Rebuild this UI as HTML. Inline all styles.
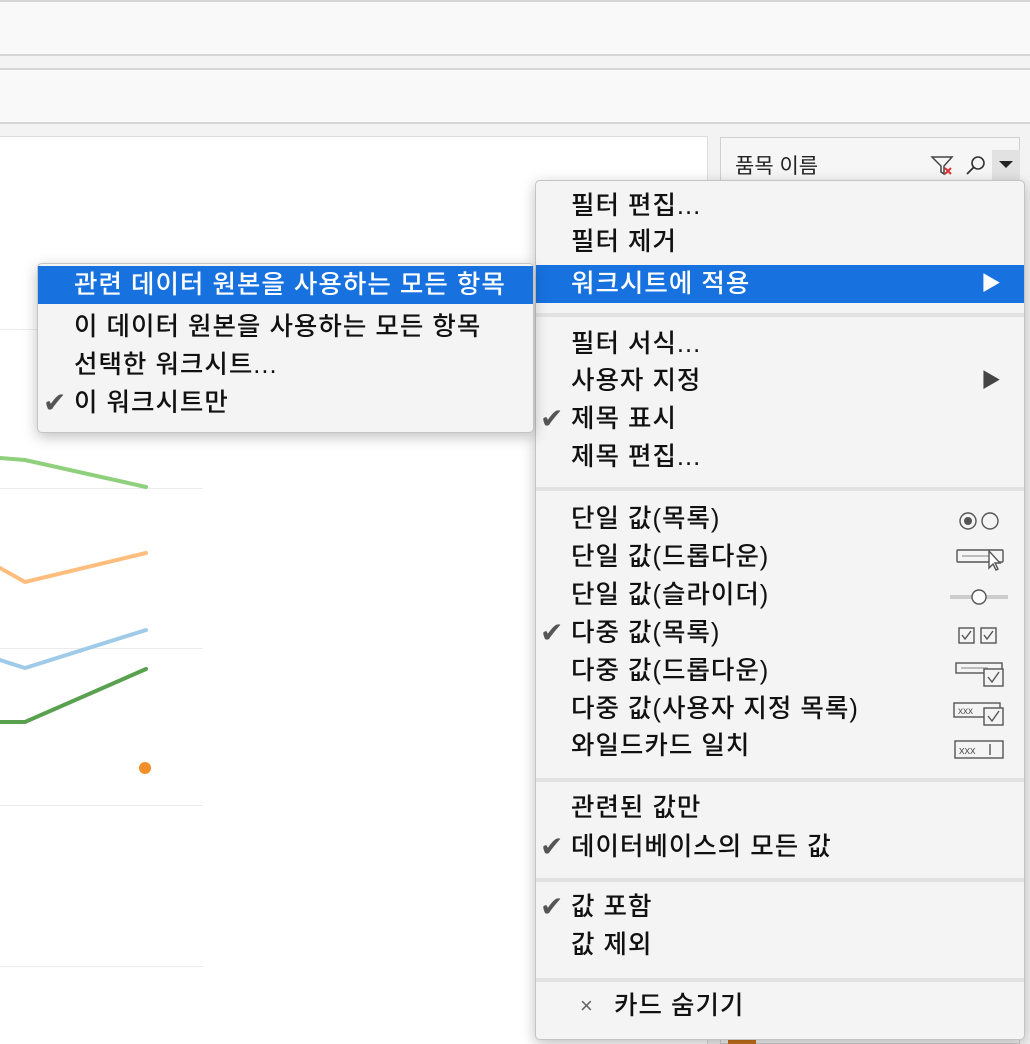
<!DOCTYPE html>
<html><head><meta charset="utf-8">
<style>
*{margin:0;padding:0;box-sizing:border-box}
body{width:1030px;height:1044px;overflow:hidden;background:#f3f3f3;position:relative;font-family:"Liberation Sans","Noto Sans CJK KR","NanumGothic",sans-serif;color:#111}
.abs{position:absolute}
.band{position:absolute;left:0;width:1030px;background:#f9f9f9;border-top:2px solid #d6d6d6;border-bottom:2px solid #d6d6d6}
.grid{position:absolute;left:0;width:203px;height:1px;background:#ececec}
.menu{position:absolute;background:#f4f4f4;border:1px solid #c4c4c4;border-radius:5px;box-shadow:0 4px 14px rgba(0,0,0,.25)}
.it{position:absolute;left:0;right:0;height:38px;line-height:38px;font-size:25.5px;letter-spacing:1px;white-space:nowrap;font-weight:500}
.hl{background:#1772e0;color:#fff}
.sep{position:absolute;left:0;right:0;height:4px;background:#e2e2e2}
.chk{position:absolute;font-size:28px;color:#555;letter-spacing:0}
.ico{position:absolute}
</style></head><body>
<div class="band" style="top:0;height:56px"></div>
<div class="band" style="top:68px;height:56px"></div>
<div class="abs" style="left:0;top:136px;width:708px;height:908px;background:#fff;border-top:1px solid #dcdcdc;border-right:1px solid #dcdcdc"></div>
<div class="grid" style="top:329px"></div>
<div class="grid" style="top:488px"></div>
<div class="grid" style="top:648px"></div>
<div class="grid" style="top:805px"></div>
<div class="grid" style="top:966px"></div>
<svg class="abs" style="left:0;top:0" width="210" height="1044">
<polyline points="0,458 25,460 146,487" fill="none" stroke="#8fd07c" stroke-width="4" stroke-linecap="round"/>
<polyline points="0,568 25,582 146,553" fill="none" stroke="#ffbe7d" stroke-width="4" stroke-linecap="round"/>
<polyline points="0,660 25,668 146,630" fill="none" stroke="#a0cbe8" stroke-width="4" stroke-linecap="round"/>
<polyline points="0,722 25,722 146,669" fill="none" stroke="#59a14f" stroke-width="4" stroke-linecap="round"/>
<circle cx="145" cy="768" r="6" fill="#f28e2b"/>
</svg>
<!-- right panel -->
<div class="abs" style="left:720px;top:137px;width:300px;height:907px;background:#f6f6f6;border:1px solid #d0d0d0"></div>
<div class="abs" style="left:735px;top:150px;font-size:21px;color:#222">품목 이름</div>
<svg class="abs" style="left:930px;top:154px" width="30" height="24"><path d="M2 3 H22 L14 12 V20 L11 18 V12 Z" fill="none" stroke="#444" stroke-width="1.5"/><path d="M15 14 L21 20 M21 14 L15 20" stroke="#d33" stroke-width="2"/></svg>
<svg class="abs" style="left:964px;top:154px" width="24" height="24"><circle cx="14" cy="9" r="6" fill="none" stroke="#333" stroke-width="1.6"/><path d="M10 13 L3 20" stroke="#333" stroke-width="1.8"/></svg>
<div class="abs" style="left:992px;top:150px;width:28px;height:30px;background:#e2e2e2"></div>
<svg class="abs" style="left:998px;top:160px" width="16" height="10"><path d="M1 1 H15 L8 8 Z" fill="#222"/></svg>
<div class="abs" style="left:728px;top:1030px;width:28px;height:14px;background:#c8731e"></div>

<!-- main menu -->
<div class="menu" style="left:535px;top:180px;width:490px;height:860px">
 <div class="it" style="top:6px;padding-left:35px">필터 편집...</div>
 <div class="it" style="top:42px;padding-left:35px">필터 제거</div>
 <div class="it hl" style="top:84px;padding-left:35px">워크시트에 적용<span style="position:absolute;left:445px;top:0;font-size:20px">▶</span></div>
 <div class="sep" style="top:132px"></div>
 <div class="it" style="top:144px;padding-left:35px">필터 서식...</div>
 <div class="it" style="top:181px;padding-left:35px">사용자 지정<span style="position:absolute;left:445px;top:0;font-size:20px;color:#444">▶</span></div>
 <div class="it" style="top:219px;padding-left:35px"><span class="chk" style="left:4px;top:0">✔</span>제목 표시</div>
 <div class="it" style="top:257px;padding-left:35px">제목 편집...</div>
 <div class="sep" style="top:306px"></div>
 <div class="it" style="top:319px;padding-left:35px">단일 값(목록)</div>
 <div class="it" style="top:357px;padding-left:35px">단일 값(드롭다운)</div>
 <div class="it" style="top:395px;padding-left:35px">단일 값(슬라이더)</div>
 <div class="it" style="top:433px;padding-left:35px"><span class="chk" style="left:4px;top:0">✔</span>다중 값(목록)</div>
 <div class="it" style="top:471px;padding-left:35px">다중 값(드롭다운)</div>
 <div class="it" style="top:509px;padding-left:35px">다중 값(사용자 지정 목록)</div>
 <div class="it" style="top:546px;padding-left:35px">와일드카드 일치</div>
 <svg class="ico" style="left:412px;top:328px" width="70" height="440" fill="none" stroke="#555" stroke-width="1.4">
  <circle cx="20" cy="12" r="8"/><circle cx="20" cy="12" r="4" fill="#555" stroke="none"/><circle cx="42" cy="12" r="8"/>
  <rect x="9" y="41" width="46" height="12" rx="1"/><path d="M14 47 H42" stroke="#aaa"/><path d="M41 42 V59 L45 55 L48 61 L50 60 L47 54 L52 54 Z" fill="#fff"/>
  <path d="M2 88 H60" stroke="#ccc" stroke-width="4"/><circle cx="31" cy="88" r="7" fill="#fff"/>
  <rect x="11" y="119" width="15" height="15"/><path d="M14 126 L17 130 L23 122"/><rect x="33" y="119" width="15" height="15"/><path d="M36 126 L39 130 L45 122"/>
  <rect x="8" y="154" width="46" height="10"/><path d="M13 159 H40" stroke="#aaa"/><rect x="36" y="160" width="19" height="17" fill="#f4f4f4"/><path d="M40 168 L44 173 L51 163"/>
  <rect x="6" y="194" width="46" height="14"/><text x="10" y="205" font-size="10" fill="#555" stroke="none" font-family="Liberation Sans">xxx</text><rect x="36" y="199" width="19" height="17" fill="#f4f4f4"/><path d="M40 207 L44 212 L51 202"/>
  <rect x="7" y="232" width="48" height="17"/><text x="11" y="245" font-size="11" fill="#555" stroke="none" font-family="Liberation Sans">xxx</text><path d="M42 235 V246"/>
 </svg>
 <div class="sep" style="top:597px"></div>
 <div class="it" style="top:608px;padding-left:35px">관련된 값만</div>
 <div class="it" style="top:647px;padding-left:35px"><span class="chk" style="left:4px;top:0">✔</span>데이터베이스의 모든 값</div>
 <div class="sep" style="top:697px"></div>
 <div class="it" style="top:707px;padding-left:35px"><span class="chk" style="left:4px;top:0">✔</span>값 포함</div>
 <div class="it" style="top:745px;padding-left:35px">값 제외</div>
 <div class="sep" style="top:797px"></div>
 <div class="it" style="top:806px;padding-left:78px"><span style="position:absolute;left:44px;top:0;color:#666;font-size:22px">×</span>카드 숨기기</div>
</div>

<!-- submenu -->
<div class="menu" style="left:37px;top:263px;width:497px;height:170px">
 <div class="it hl" style="top:2px;padding-left:36px">관련 데이터 원본을 사용하는 모든 항목</div>
 <div class="it" style="top:44px;padding-left:36px">이 데이터 원본을 사용하는 모든 항목</div>
 <div class="it" style="top:82px;padding-left:36px">선택한 워크시트...</div>
 <div class="it" style="top:120px;padding-left:36px"><span class="chk" style="left:5px;top:0">✔</span>이 워크시트만</div>
</div>
</body></html>
